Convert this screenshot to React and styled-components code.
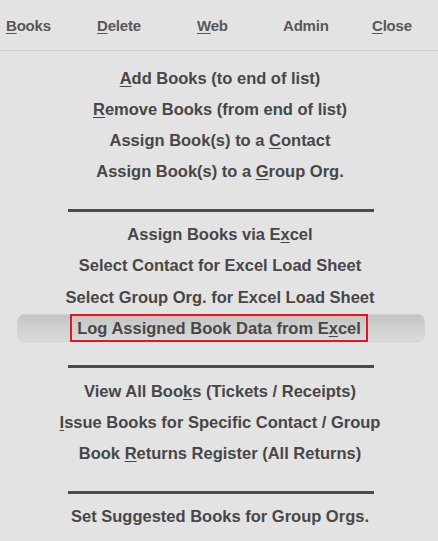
import React from "react";
import styled, { createGlobalStyle } from "styled-components";

const Global = createGlobalStyle`
  html, body { margin: 0; padding: 0; background: #e3e3e3; }
  body { font-family: "Liberation Sans", Arial, sans-serif; }
`;

const Page = styled.div`
  width: 438px;
  height: 541px;
  background: #e3e3e3;
  overflow: hidden;
  font-family: "Liberation Sans", Arial, sans-serif;
  font-weight: bold;
`;

const TopBar = styled.nav`
  display: grid;
  grid-template-columns: 91px 100px 86px 89px auto;
  align-items: center;
  padding-left: 6px;
  border-bottom: 1px solid #c8c8c8;
  box-sizing: border-box;
  height: 51px;
`;

const TopItem = styled.span`
  font-size: 15px;
  color: #585858;
  letter-spacing: -0.2px;
  cursor: default;
  u { text-decoration-thickness: 1px; text-underline-offset: 2px; }
`;

const Menu = styled.div`
  display: flex;
  flex-direction: column;
  padding-top: 11.5px;
`;

const Row = styled.div`
  height: 31.25px;
  display: flex;
  align-items: center;
  justify-content: center;
  padding-left: 2px;
  font-size: 16.5px;
  color: #474747;
  white-space: nowrap;
  u { text-decoration-thickness: 1px; text-underline-offset: 2px; }
`;

const Divider = styled.hr`
  margin: 21.5px 64px 7px 68px;
  height: 3px;
  border: none;
  background: #4b4b4b;
`;

const ActiveRow = styled.div`
  height: 28px;
  margin: 1.6px 13px 1.65px 17px;
  display: flex;
  align-items: center;
  justify-content: center;
  padding-right: 4px;
  box-sizing: border-box;
  border: 1px solid #d2d2d2;
  border-radius: 7px;
  background: linear-gradient(to bottom, #c3c3c3 0%, #cfcfcf 45%, #dadada 100%);
`;

const FocusBox = styled.span`
  display: flex;
  align-items: center;
  height: 28px;
  box-sizing: border-box;
  padding: 0 5px 0 5px;
  border: 2px solid #e8151e;
  font-size: 16.5px;
  color: #474747;
  white-space: nowrap;
  u { text-decoration-thickness: 1px; text-underline-offset: 2px; }
`;

export default function App() {
  return (
    <Page>
      <Global />
      <TopBar>
        <TopItem><u>B</u>ooks</TopItem>
        <TopItem><u>D</u>elete</TopItem>
        <TopItem><u>W</u>eb</TopItem>
        <TopItem>Admin</TopItem>
        <TopItem><u>C</u>lose</TopItem>
      </TopBar>
      <Menu>
        <Row><u>A</u>dd Books (to end of list)</Row>
        <Row><u>R</u>emove Books (from end of list)</Row>
        <Row>Assign Book(s) to a&nbsp;<u>C</u>ontact</Row>
        <Row>Assign Book(s) to a&nbsp;<u>G</u>roup Org.</Row>
        <Divider />
        <Row>Assign Books via E<u>x</u>cel</Row>
        <Row>Select Contact for Excel Load Sheet</Row>
        <Row>Select Group Org. for Excel Load Sheet</Row>
        <ActiveRow>
          <FocusBox>Log Assigned Book Data from E<u>x</u>cel</FocusBox>
        </ActiveRow>
        <Divider />
        <Row>View All Boo<u>k</u>s (Tickets / Receipts)</Row>
        <Row><u>I</u>ssue Books for Specific Contact / Group</Row>
        <Row>Book&nbsp;<u>R</u>eturns Register (All Returns)</Row>
        <Divider />
        <Row>Set Suggested Books for Group Orgs.</Row>
      </Menu>
    </Page>
  );
}
